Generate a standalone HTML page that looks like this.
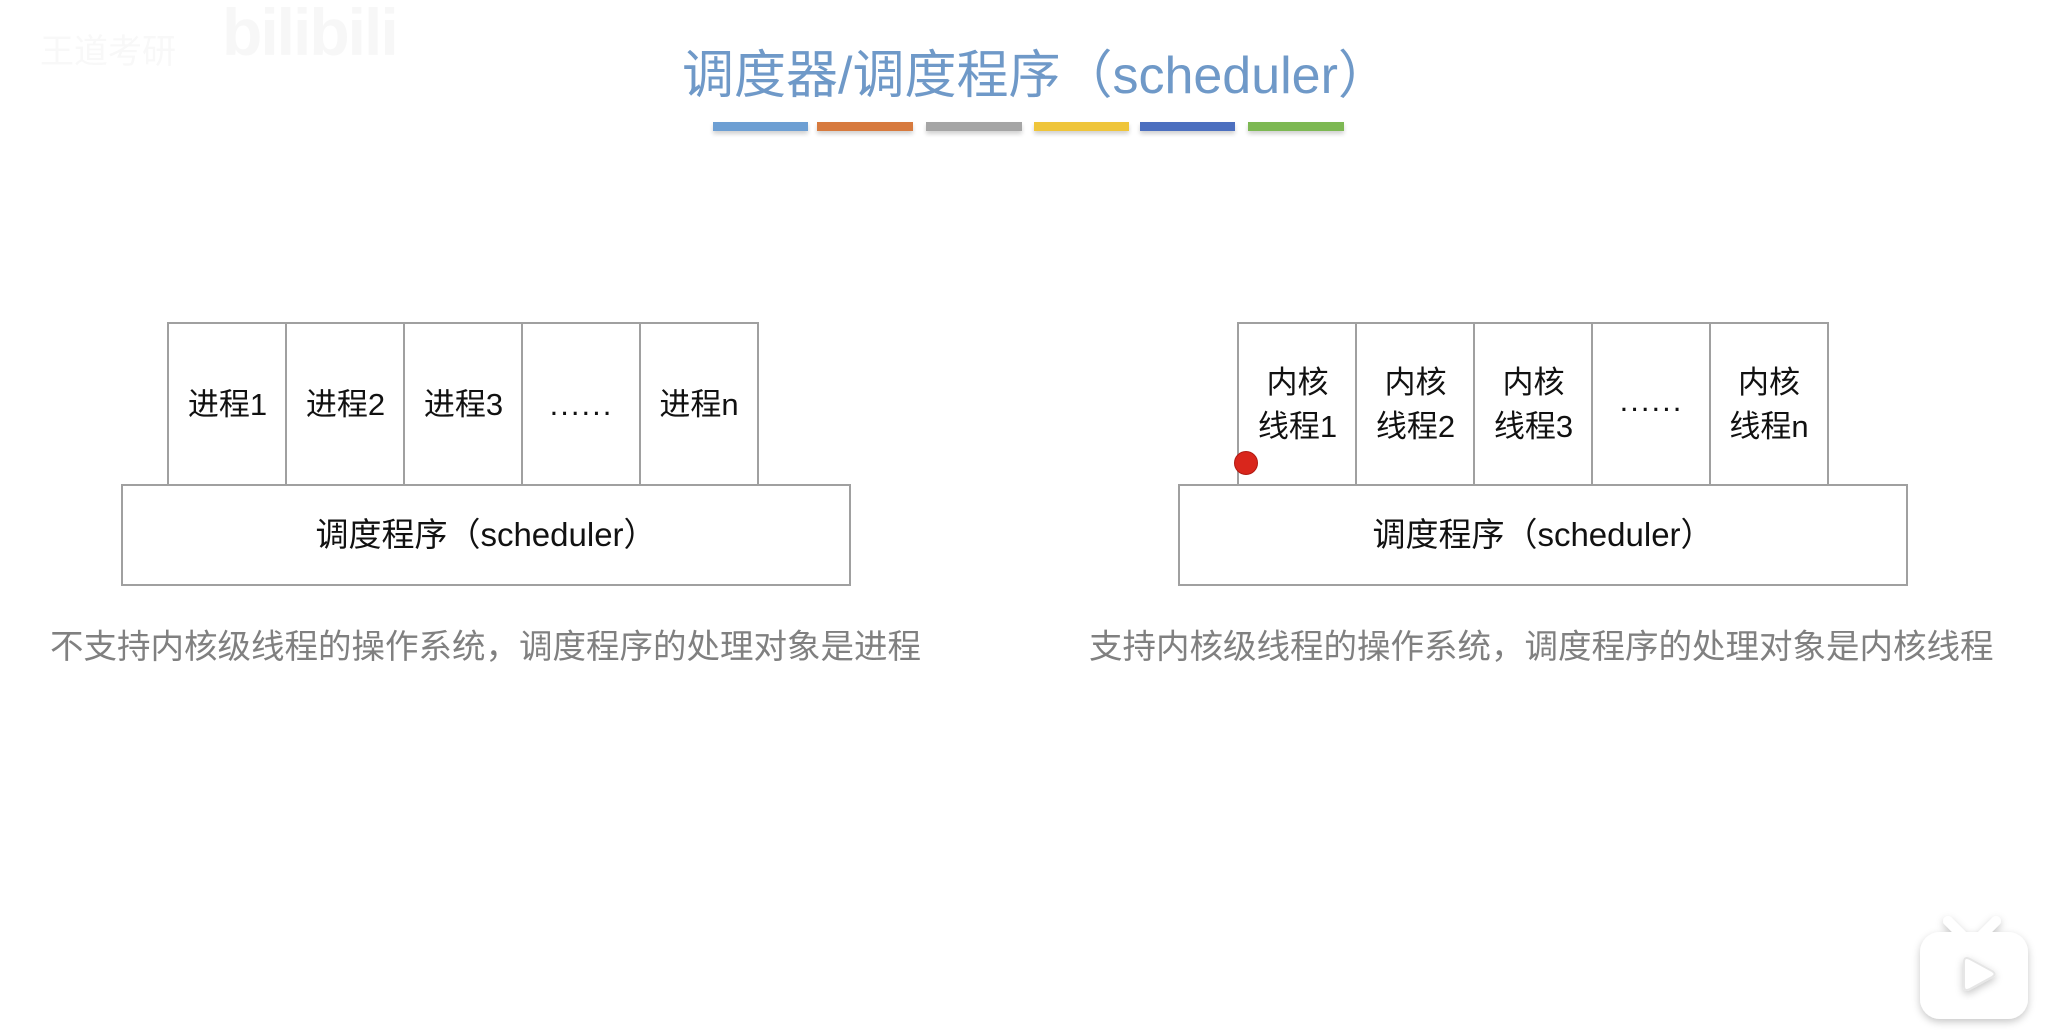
<!DOCTYPE html>
<html><head><meta charset="utf-8"><style>
body{margin:0;width:2054px;height:1034px;background:#fff;position:relative;overflow:hidden;font-family:"Liberation Sans","Noto Sans CJK SC",sans-serif;}
.a{position:absolute;}
.cell{position:absolute;box-sizing:border-box;border:2px solid #a0a0a0;background:#fff;display:flex;align-items:center;justify-content:center;text-align:center;font-size:31px;line-height:44px;color:#111;}
.cap{position:absolute;font-size:33.5px;color:#808080;white-space:nowrap;line-height:40px;}
.bar{position:absolute;top:122px;height:9px;box-shadow:0 3px 4px rgba(0,0,0,0.18);}
</style></head><body>
<div class="a" style="left:222px;top:-6px;font-size:66px;font-weight:bold;color:#f7f7f7;letter-spacing:-2px;">bilibili</div>
<div class="a" style="left:40px;top:24px;font-size:34px;color:#f8f8f8;">王道考研</div>

<div class="a" style="left:682px;top:44px;font-size:52px;line-height:64px;color:#6f99c8;white-space:nowrap;">调度器/调度程序（scheduler）</div>
<div class="bar" style="left:713px;width:95px;background:#6d9fd3"></div>
<div class="bar" style="left:817px;width:96px;background:#d77a3e"></div>
<div class="bar" style="left:926px;width:96px;background:#a5a5a5"></div>
<div class="bar" style="left:1034px;width:95px;background:#efc53a"></div>
<div class="bar" style="left:1140px;width:95px;background:#4c6fbf"></div>
<div class="bar" style="left:1248px;width:96px;background:#7db853"></div>

<!-- left -->
<div class="cell" style="left:167px;top:322px;width:121px;height:165px;">进程1</div>
<div class="cell" style="left:285px;top:322px;width:121px;height:165px;">进程2</div>
<div class="cell" style="left:403px;top:322px;width:121px;height:165px;">进程3</div>
<div class="cell" style="left:521px;top:322px;width:121px;height:165px;letter-spacing:2px;">......</div>
<div class="cell" style="left:639px;top:322px;width:120px;height:165px;">进程n</div>
<div class="cell" style="left:121px;top:484px;width:730px;height:102px;font-size:33px;">调度程序（scheduler）</div>
<div class="cap" style="left:50px;top:628px;">不支持内核级线程的操作系统，调度程序的处理对象是进程</div>

<!-- right -->
<div class="cell" style="left:1237px;top:322px;width:121px;height:165px;">内核<br>线程1</div>
<div class="cell" style="left:1355px;top:322px;width:121px;height:165px;">内核<br>线程2</div>
<div class="cell" style="left:1473px;top:322px;width:121px;height:165px;">内核<br>线程3</div>
<div class="cell" style="left:1591px;top:322px;width:121px;height:165px;letter-spacing:2px;"><span style="position:relative;top:-4px">......</span></div>
<div class="cell" style="left:1709px;top:322px;width:120px;height:165px;">内核<br>线程n</div>
<div class="cell" style="left:1178px;top:484px;width:730px;height:102px;font-size:33px;">调度程序（scheduler）</div>
<div class="cap" style="left:1089px;top:628px;">支持内核级线程的操作系统，调度程序的处理对象是内核线程</div>

<div class="a" style="left:1234px;top:451px;width:24px;height:24px;border-radius:50%;background:#d9261c;border:1px solid #b01a12;box-sizing:border-box;"></div>

<svg class="a" style="left:1910px;top:905px;" width="130" height="125" viewBox="0 0 130 125">
<defs><filter id="s" x="-30%" y="-30%" width="160%" height="160%"><feDropShadow dx="0" dy="3" stdDeviation="4" flood-color="#000" flood-opacity="0.22"/></filter></defs>
<g filter="url(#s)" fill="#fff">
<path d="M38 16 L52 30 M86 16 L72 30" stroke="#fff" stroke-width="10" stroke-linecap="round"/>
<rect x="10" y="27" width="108" height="87" rx="20"/>
</g>
<path d="M54 57 Q54 51 60 54 L82 66 Q87 69 82 72 L60 84 Q54 87 54 81 Z" fill="#fff" stroke="#e6e6e6" stroke-width="2" filter="url(#s)"/>
</svg>
</body></html>
